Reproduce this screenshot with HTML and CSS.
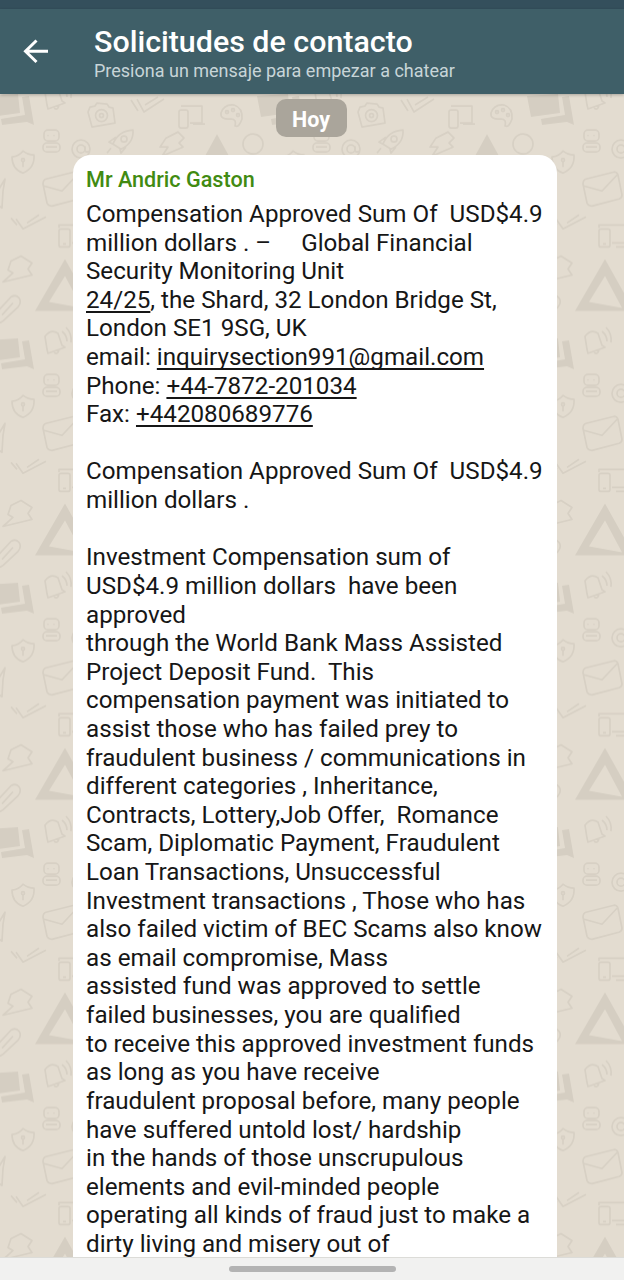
FILE: index.html
```html
<!DOCTYPE html>
<html lang="es">
<head>
  <meta charset="UTF-8" />
  <title>Solicitudes de contacto</title>
  <link rel="stylesheet" href="styles.css">
</head>
<body>
  <div class="status-bar"></div>
  <header class="topbar">
    <svg class="back" viewBox="0 0 26 26" width="26" height="26">
      <path d="M25 13.3H3M13.5 2.5L2.5 13.3L13.5 24" />
    </svg>
    <div class="heading">
      <h1>Solicitudes de contacto</h1>
      <p>Presiona un mensaje para empezar a chatear</p>
    </div>
  </header>

  <main class="chat">
    <!-- fondo con dibujos -->
    <svg class="wallpaper" viewBox="0 94 624 1163">
      <defs>
        <pattern id="doodles" x="-22" y="81" width="270" height="244.4" patternUnits="userSpaceOnUse" viewBox="-22 81 270 244.4">
          <!-- portátil -->
          <path class="fill" d="M-13 96L18 94L20 113L-9 117ZM22 97L29 96L34 125L27 122L2 125L1 119L25 115Z" />
          <!-- campana -->
          <path d="M45 92Q51 84 58 89L62 101L65 103L48 109L47 105ZM54 108Q58 111 59 105M62 87Q67 91 67 97M66 83Q72 89 71 98" />
          <!-- robot -->
          <rect x="44" y="130" width="15" height="11" rx="4" />
          <rect x="43" y="143" width="17" height="9" rx="4" />
          <path d="M48 135v1M54 135v1M46 147h11" />
          <!-- arroba -->
          <circle cx="81" cy="149" r="9" />
          <circle cx="81" cy="149" r="4" />
          <path d="M85 146v5q2 2 4 0" />
          <!-- escudo -->
          <path d="M23 151Q28 155 34 155Q35 168 23 173Q12 169 12 157Q19 156 23 151Z" />
          <circle cx="23" cy="160" r="1.5" />
          <path d="M23 161v6" />
          <!-- sobre -->
          <path d="M46 179L74 172Q77 172 78 175L82 195Q82 198 79 199L52 206Q48 206 47 203L43 184Q43 180 46 179ZM44 186L62 191L77 175" />
          <!-- doble check -->
          <path d="M11 218L17 225M16 219L23 229L46 217M27 223L39 215" />
          <!-- móvil y pantalla -->
          <rect x="59" y="229" width="11" height="18" rx="2" />
          <path d="M59 228V225H90V243H72M63 244h3M76 247h18" />
          <!-- rayo -->
          <path d="M11 261L21 256L32 263L28 269L32 275L3 282L13 273L8 270Z" />
          <!-- estrella -->
          <path d="M-20 184L-10 188L-4 178L-1 189L5 179L3 191L2 208L-7 202L-17 209L-14 197Z" />
          <!-- triángulo -->
          <path class="fill" fill-rule="evenodd" d="M65 259L94 311H35ZM65 276L49 302L82 308Z" />
          <!-- clip -->
          <path d="M-3 312L11 297Q16 294 19 298Q22 302 18 307L3 321Q-2 325 -6 321M2 315L13 303" />
          <!-- cámara -->
          <path d="M90 107L95 106L97 103L107 104L109 107L113 108L115 123L92 127L88 112Z" />
          <circle cx="101.5" cy="115.5" r="6" />
          <circle cx="101.5" cy="115.5" r="2" />
          <path d="M131 100L138 111M137 99L144 112L164 99M145 105L158 97" />
          <rect x="179" y="110" width="9" height="18" rx="2" />
          <path d="M181 106H202V123H190M193 124h12" />
          <!-- paleta -->
          <path d="M221 113Q224 104 234 105Q243 108 242 119Q239 128 235 126Q237 119 231 119Q220 120 221 113Z" />
          <circle cx="227" cy="112" r="1.5" />
          <circle cx="233" cy="110" r="1.5" />
          <circle cx="238" cy="115" r="1.5" />
          <!-- cohete -->
          <path d="M133 130Q134 143 121 149L113 144Q118 131 133 130ZM116 137L109 142L113 144M126 147L121 153L120 149M111 148L107 153" />
          <circle cx="124" cy="139" r="3" />
          <path d="M166 138L178 132L184 138L179 143L183 147L162 156L168 147L160 147Z" />
          <path class="fill" d="M217 134L229 156H205Z" />
          <circle cx="-17" cy="144" r="10" />
          <circle cx="253" cy="144" r="10" />
        </pattern>
      </defs>
      <rect class="tile" x="0" y="94" width="624" height="1163" />
    </svg>

    <div class="date">Hoy</div>

    <article class="bubble">
      <h2>Mr Andric Gaston</h2>
      <div class="text">Compensation Approved Sum Of  USD$4.9
million dollars . –     Global Financial
Security Monitoring Unit
<u>24/25</u>, the Shard, 32 London Bridge St,
London SE1 9SG, UK
email: <u>inquirysection991@gmail.com</u>
Phone: <u>+44-7872-201034</u>
Fax: <u>+442080689776</u>

Compensation Approved Sum Of  USD$4.9
million dollars .

Investment Compensation sum of
USD$4.9 million dollars  have been
approved
through the World Bank Mass Assisted
Project Deposit Fund.  This
compensation payment was initiated to
assist those who has failed prey to
fraudulent business / communications in
different categories , Inheritance,
Contracts, Lottery,Job Offer,  Romance
Scam, Diplomatic Payment, Fraudulent
Loan Transactions, Unsuccessful
Investment transactions , Those who has
also failed victim of BEC Scams also know
as email compromise, Mass
assisted fund was approved to settle
failed businesses, you are qualified
to receive this approved investment funds
as long as you have receive
fraudulent proposal before, many people
have suffered untold lost/ hardship
in the hands of those unscrupulous
elements and evil-minded people
operating all kinds of fraud just to make a
dirty living and misery out of</div>
    </article>
  </main>

  <footer class="navbar"><span class="handle"></span></footer>
</body>
</html>
```
FILE: styles.css
```css
* { box-sizing: border-box; }
body {
  margin: 0;
  height: 1280px;
  display: flex;
  flex-direction: column;
  overflow: hidden;
  font-family: Roboto, sans-serif;
}
h1, h2, p { margin: 0; }
.status-bar { height: 9px; background: #344f5c; flex: none; }
.topbar {
  height: 85px;
  flex: none;
  display: flex;
  align-items: flex-start;
  padding-left: 23px;
  background: #3f5f68;
  color: #fff;
  position: relative;
  box-shadow: 0 1px 3px rgba(0,0,0,0.25);
  z-index: 1;
}
.back {
  margin-top: 29px;
  fill: none;
  stroke: #fff;
  stroke-width: 3;
}
.heading { margin: 15px 0 0 45px; white-space: nowrap; }
.heading h1 {
  font-size: 30.4px;
  line-height: 36px;
  font-weight: 500;
}
.heading p {
  font-size: 18px;
  line-height: 21px;
  color: #c8d5d8;
}
.chat {
  flex: 1;
  min-height: 0;
  position: relative;
  overflow: hidden;
  display: flex;
  flex-direction: column;
  align-items: center;
  background: #e3dcd0;
}
.wallpaper {
  position: absolute;
  top: 0; left: 0;
  width: 624px;
  height: 1163px;
}
.wallpaper path, .wallpaper circle, .wallpaper rect {
  fill: none;
  stroke: #d7d0c4;
  stroke-width: 1.7;
  stroke-linejoin: round;
}
.wallpaper .fill { fill: #d5cec2; stroke: none; }
.wallpaper .tile { fill: url(#doodles); stroke: none; }
.date {
  position: relative;
  flex: none;
  width: 71px;
  height: 38px;
  margin: 5px 2px 18px 0;
  border-radius: 10px;
  background: #aaa59b;
  color: #fff;
  font-size: 21.5px;
  line-height: 41px;
  font-weight: 700;
  text-align: center;
}
.bubble {
  position: relative;
  flex: none;
  width: 484px;
  height: 1200px;
  margin-left: 6px;
  padding: 12px 12px 0 13px;
  border-radius: 18px;
  background: #fff;
}
.bubble h2 {
  font-size: 21.6px;
  line-height: 25px;
  font-weight: 500;
  color: #418b12;
}
.text {
  margin-top: 8px;
  font-size: 24.2px;
  line-height: 28.61px;
  white-space: pre;
  color: #161616;
}
.text u {
  text-underline-offset: 3px;
  text-decoration-thickness: 1.5px;
  text-decoration-skip-ink: none;
}
.navbar {
  height: 23px;
  flex: none;
  display: flex;
  justify-content: center;
  align-items: center;
  background: #f1f1f0;
  border-top: 1px solid #dcdcd8;
}
.handle { width: 167px; height: 6px; border-radius: 3px; background: #b3b3b3; }
```
